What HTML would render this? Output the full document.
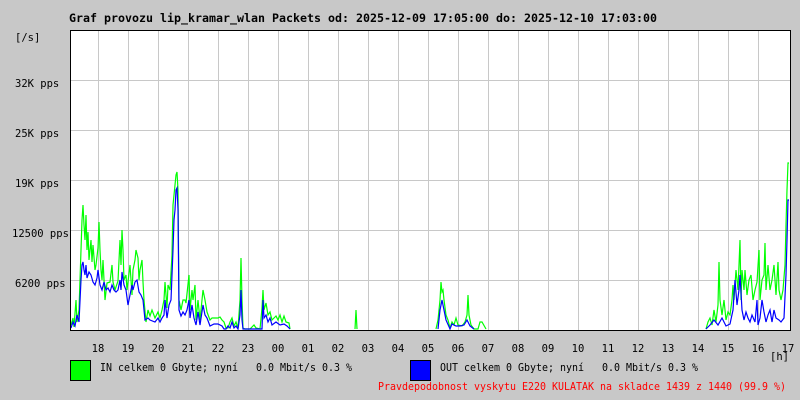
<!DOCTYPE html>
<html><head><meta charset="utf-8"><style>
html,body{margin:0;padding:0;}
body{width:800px;height:400px;background:#c8c8c8;overflow:hidden;position:relative;font-family:"DejaVu Sans Mono","Liberation Mono",monospace;}
svg{position:absolute;left:0;top:0;}
text{font-family:"DejaVu Sans Mono","Liberation Mono",monospace;font-size:10.5px;fill:#000;white-space:pre;}
</style></head><body>
<svg width="800" height="400" xmlns="http://www.w3.org/2000/svg">
<text x="69" y="22" textLength="588" lengthAdjust="spacingAndGlyphs" style="font-weight:bold;font-size:11.5px">Graf provozu lip_kramar_wlan Packets od: 2025-12-09 17:05:00 do: 2025-12-10 17:03:00</text>
<rect x="70" y="30" width="720" height="300" fill="#fff"/>
<g stroke="#c8c8c8" stroke-width="1">
<path d="M98.5 31V330M128.5 31V330M158.5 31V330M188.5 31V330M218.5 31V330M248.5 31V330M278.5 31V330M308.5 31V330M338.5 31V330M368.5 31V330M398.5 31V330M428.5 31V330M458.5 31V330M488.5 31V330M518.5 31V330M548.5 31V330M578.5 31V330M608.5 31V330M638.5 31V330M668.5 31V330M698.5 31V330M728.5 31V330M758.5 31V330"/>
<path d="M71 80.5H790M71 130.5H790M71 180.5H790M71 230.5H790M71 280.5H790"/>
</g>
<g fill="none" stroke-width="1.2" stroke-linejoin="miter">
<polyline stroke="#00ff00" points="71,325 73,318 74,327 76,300 77,322 79,310 81,250 82,220 83,205 84,225 85,240 86,215 87,250 88,232 89,260 91,240 92,262 93,245 95,270 96,265 98,248 99,222 100,250 101,270 102,280 103,260 105,300 107,283 110,282 112,265 113,282 115,290 118,281 120,240 121,265 122,230 123,250 124,280 126,275 127,290 130,265 132,295 133,270 135,260 136,250 138,258 139,280 140,270 142,260 143,282 144,300 146,322 148,310 150,316 152,310 155,318 158,312 160,318 162,310 164,300 165,282 167,308 168,285 170,290 172,255 173,205 174,195 175,185 176,175 177,172 178,190 179,300 181,310 183,300 185,300 186,303 189,275 190,310 192,290 193,300 195,285 196,320 198,300 200,320 203,290 205,300 207,312 210,320 212,318 215,318 218,318 220,317 222,320 224,322 226,328 228,328 230,322 232,318 234,326 236,322 238,328 240,300 241,258 242,300 243,328 245,329 250,329 254,325 256,328 260,329 262,308 263,290 264,310 266,303 268,315 270,312 272,320 274,318 276,316 278,320 280,315 282,322 284,316 286,322 289,323 290,329"/>
<polyline stroke="#00ff00" points="355,329 356,310 357,329"/>
<polyline stroke="#00ff00" points="436,329 438,320 440,300 441,282 442,292 443,290 444,300 446,315 448,320 450,328 452,322 454,325 456,318 458,325 462,326 465,322 467,315 468,295 469,315 471,325 474,329 478,329 480,322 482,322 486,329"/>
<polyline stroke="#00ff00" points="706,329 708,322 710,318 712,325 714,310 716,322 718,305 719,262 720,300 722,315 724,300 726,320 728,312 730,315 732,300 733,285 734,300 736,270 738,290 740,240 741,300 742,270 744,290 745,270 747,295 749,280 751,275 753,300 755,290 757,282 759,250 760,300 762,280 764,275 765,243 766,290 768,265 770,290 772,280 774,265 776,295 778,262 779,290 781,300 783,290 785,265 786,225 787,190 788,163 789,163"/>
<polyline stroke="#0000ff" points="71,328 73,322 75,326 77,315 79,322 81,280 82,265 83,262 84,270 85,275 86,265 87,278 89,272 91,275 93,282 95,285 97,278 98,270 100,285 102,290 104,282 106,290 108,288 110,292 112,285 114,290 116,292 118,290 120,280 121,290 122,272 124,285 126,290 128,305 130,295 132,285 133,290 135,282 137,280 139,292 141,295 143,300 145,320 148,318 150,320 155,322 158,318 160,322 162,318 164,315 165,300 167,318 169,305 171,300 172,275 173,250 174,220 175,210 176,190 177,188 178,210 179,310 181,316 183,312 185,315 187,310 189,300 190,318 192,305 194,318 196,325 198,312 200,325 203,305 205,315 207,318 210,326 214,324 218,324 222,326 224,329 226,329 228,326 230,328 232,322 234,328 236,326 238,329 240,315 241,290 242,320 243,329 262,329 263,300 264,318 266,315 268,322 270,318 272,325 276,322 280,325 284,324 287,326 290,329"/>
<polyline stroke="#0000ff" points="438,329 440,310 442,300 444,310 446,320 450,329 452,324 456,326 460,326 464,325 467,320 470,326 474,329"/>
<polyline stroke="#0000ff" points="706,329 710,325 714,320 718,325 722,318 726,326 730,324 733,310 735,280 737,305 739,290 740,275 742,310 744,320 746,312 748,318 750,322 752,315 755,322 757,300 758,325 760,318 762,300 764,312 766,322 768,315 770,310 772,322 774,310 776,318 779,320 781,322 784,318 786,275 787,240 788,200 789,200"/>
</g>
<path d="M70.5 30V330.5H790.5V30" fill="none" stroke="#000" stroke-width="1"/>
<path d="M70 30.5H790" stroke="#000" stroke-width="1"/>
<text x="15" y="41">[/s]</text>
<text x="15" y="87">32K pps</text>
<text x="15" y="137">25K pps</text>
<text x="15" y="187">19K pps</text>
<text x="12" y="237">12500 pps</text>
<text x="15" y="287">6200 pps</text>
<g text-anchor="middle">
<text x="98" y="352">18</text><text x="128" y="352">19</text><text x="158" y="352">20</text><text x="188" y="352">21</text><text x="218" y="352">22</text><text x="248" y="352">23</text><text x="278" y="352">00</text><text x="308" y="352">01</text><text x="338" y="352">02</text><text x="368" y="352">03</text><text x="398" y="352">04</text><text x="428" y="352">05</text><text x="458" y="352">06</text><text x="488" y="352">07</text><text x="518" y="352">08</text><text x="548" y="352">09</text><text x="578" y="352">10</text><text x="608" y="352">11</text><text x="638" y="352">12</text><text x="668" y="352">13</text><text x="698" y="352">14</text><text x="728" y="352">15</text><text x="758" y="352">16</text><text x="788" y="352">17</text>
</g>
<text x="770" y="360">[h]</text>
<rect x="70.5" y="360.5" width="20" height="20" fill="#00ff00" stroke="#000"/>
<text x="100" y="371" textLength="252" lengthAdjust="spacingAndGlyphs">IN celkem 0 Gbyte; nyní   0.0 Mbit/s 0.3 %</text>
<rect x="410.5" y="360.5" width="20" height="20" fill="#0000ff" stroke="#000"/>
<text x="440" y="371" textLength="258" lengthAdjust="spacingAndGlyphs">OUT celkem 0 Gbyte; nyní   0.0 Mbit/s 0.3 %</text>
<text x="378" y="390" textLength="408" lengthAdjust="spacingAndGlyphs" style="fill:#ff0000">Pravdepodobnost vyskytu E220 KULATAK na skladce 1439 z 1440 (99.9 %)</text>
</svg>
</body></html>
